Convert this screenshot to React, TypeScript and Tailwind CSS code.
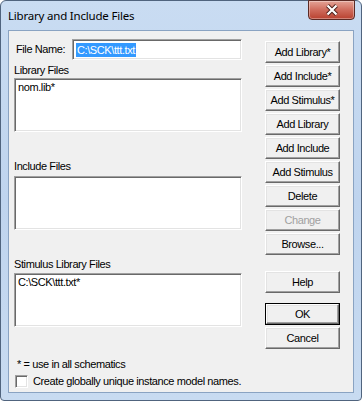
import React from 'react';

const font = { fontFamily: '"Liberation Sans", Arial, sans-serif' };

const Btn: React.FC<{ label: string; disabled?: boolean; isDefault?: boolean }> = ({
  label,
  disabled,
  isDefault,
}) => {
  const face = (
    <div
      className={`h-full w-full flex items-center justify-center bg-[#f0f0f0] border border-t-white border-l-white border-r-[#696969] border-b-[#696969] shadow-[inset_-1px_-1px_0_#a0a0a0,inset_1px_1px_0_#e3e3e3] text-[11px] tracking-[-0.4px] ${
        disabled ? 'text-[#a0a0a0]' : 'text-black'
      }`}
    >
      {label}
    </div>
  );
  if (isDefault) {
    return <div className="w-[75px] h-[22px] border border-black">{face}</div>;
  }
  return <div className="w-[75px] h-[22px]">{face}</div>;
};

const ListBox: React.FC<{ items?: string[]; className?: string }> = ({ items = [], className = '' }) => (
  <div
    className={`w-[228px] h-[54px] bg-white border border-t-[#a0a0a0] border-l-[#a0a0a0] border-r-white border-b-white shadow-[inset_1px_1px_0_#696969,inset_-1px_-1px_0_#e3e3e3] px-[3px] pt-[2px] text-[11px] leading-[13px] tracking-[-0.4px] ${className}`}
  >
    {items.map((it) => (
      <div key={it}>{it}</div>
    ))}
  </div>
);

export default function App() {
  return (
    <div className="w-[362px] h-[401px] bg-white" style={font}>
      <div className="w-[362px] h-[401px] rounded-t-[6px] rounded-b-[4px] border border-[#50647e] bg-gradient-to-b from-[#c9dcf2] via-[#bfd4ee] to-[#c8dbf1] flex flex-col">
        {/* Title bar */}
        <div className="h-[29px] flex items-start justify-between">
          <div
            className="pl-[7px] pt-[6px] text-[11.5px] tracking-[-0.2px] text-black"
            style={{ fontFamily: '"Noto Sans", "Open Sans", sans-serif' }}
          >
            Library and Include Files
          </div>
          <div className="mr-[6px] -mt-px w-[47px] h-[20px] rounded-b-[4px] border border-[#5b2a24] bg-gradient-to-b from-[#e3a396] via-[#cf6b5c] to-[#b8402f] flex items-center justify-center shadow-[inset_0_0_0_1px_rgba(255,255,255,0.35)]">
            <svg width="14" height="12" viewBox="0 0 14 12">
              <path d="M2.5 1.5 L11.5 10.5 M11.5 1.5 L2.5 10.5" stroke="#4a1f1a" strokeWidth="4" fill="none" />
              <path d="M2.5 1.5 L11.5 10.5 M11.5 1.5 L2.5 10.5" stroke="#ffffff" strokeWidth="2.2" fill="none" />
            </svg>
          </div>
        </div>

        {/* Client area */}
        <div className="mx-[7px] h-[363px] border border-[#8aa3c2] bg-[#f0f0f0] text-black">
          <div className="flex items-start">
            {/* Left column */}
            <div className="ml-[5px] w-[228px] flex flex-col whitespace-nowrap">
              <div className="mt-[8px] h-[21px] flex items-center">
                <span className="ml-[2px] w-[56px] text-[11px] tracking-[-0.4px]">File Name:</span>
                <div className="w-[170px] h-[21px] bg-white border border-t-[#a0a0a0] border-l-[#a0a0a0] border-r-white border-b-white shadow-[inset_1px_1px_0_#696969,inset_-1px_-1px_0_#e3e3e3] flex items-center pl-[3px]">
                  <span className="bg-[#3399ff] text-white text-[11px] tracking-[-0.4px] leading-[14px] px-px">
                    C:\SCK\ttt.txt
                  </span>
                </div>
              </div>
              <div className="mt-[4px] h-[13px] leading-[13px] text-[11px] tracking-[-0.4px]">Library Files</div>
              <ListBox className="mt-[1px]" items={['nom.lib*']} />
              <div className="mt-[28px] h-[13px] leading-[13px] text-[11px] tracking-[-0.4px]">Include Files</div>
              <ListBox className="mt-[3px]" />
              <div className="mt-[28px] h-[13px] leading-[13px] text-[11px] tracking-[-0.4px]">
                Stimulus Library Files
              </div>
              <ListBox className="mt-[2px]" items={['C:\\SCK\\ttt.txt*']} />

              <div className="ml-[3px] mt-[31px] h-[13px] leading-[13px] text-[11px] tracking-[-0.4px]">
                * = use in all schematics
              </div>
              <div className="ml-[1px] mt-[4px] h-[13px] flex items-center">
                <div className="w-[13px] h-[13px] shrink-0 bg-white border border-t-[#a0a0a0] border-l-[#a0a0a0] border-r-white border-b-white shadow-[inset_1px_1px_0_#696969,inset_-1px_-1px_0_#e3e3e3]" />
                <span className="ml-[5px] text-[11px] leading-[13px] tracking-[-0.4px]">
                  Create globally unique instance model names.
                </span>
              </div>
            </div>

            {/* Right column */}
            <div className="ml-[23px] mt-[10px] flex flex-col gap-[2px]">
              <Btn label="Add Library*" />
              <Btn label="Add Include*" />
              <Btn label="Add Stimulus*" />
              <Btn label="Add Library" />
              <Btn label="Add Include" />
              <Btn label="Add Stimulus" />
              <Btn label="Delete" />
              <Btn label="Change" disabled />
              <Btn label="Browse..." />
              <div className="mt-[14px]">
                <Btn label="Help" />
              </div>
              <div className="mt-[8px]">
                <Btn label="OK" isDefault />
              </div>
              <Btn label="Cancel" />
            </div>
          </div>
        </div>
      </div>
    </div>
  );
}
